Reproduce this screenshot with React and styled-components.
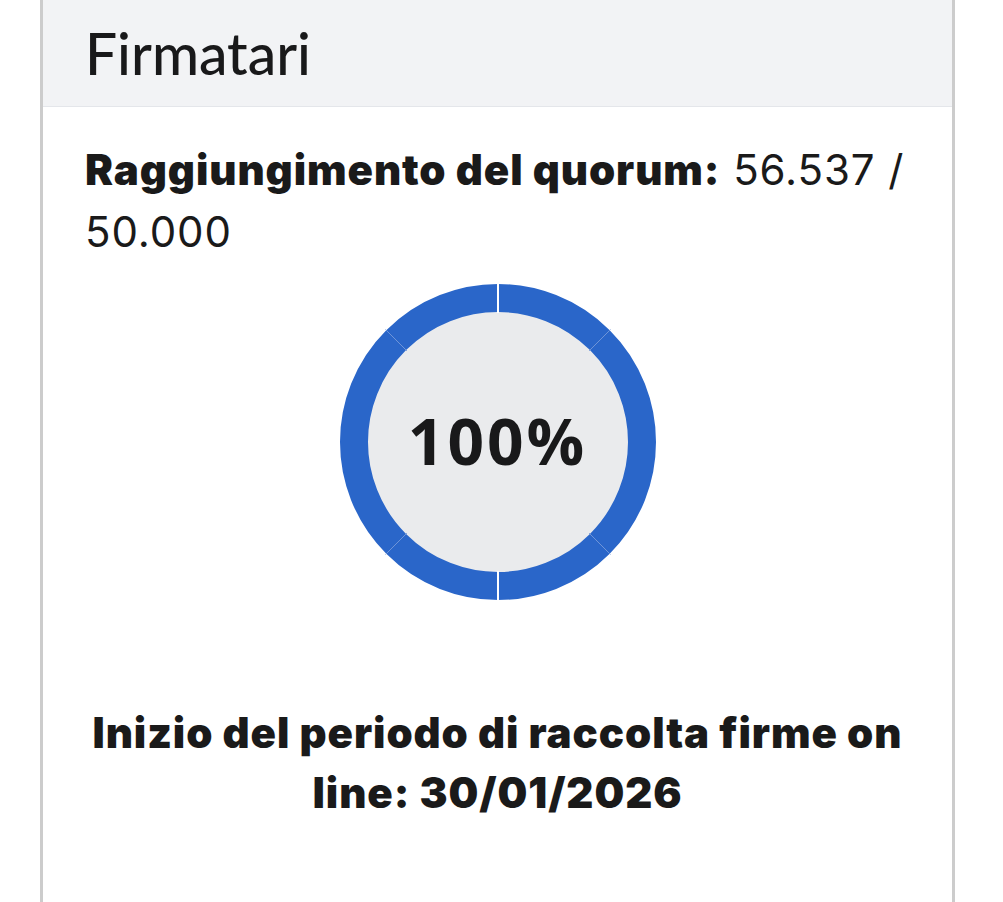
import React from 'react';
import styled, { createGlobalStyle } from 'styled-components';

const GlobalStyle = createGlobalStyle`
    body {
        margin: 0;
        background: #ffffff;
        font-family: Inter, "Liberation Sans", sans-serif;
        color: #1a1a1a;
    }
`;

const Card = styled.div`
    margin-left: 40px;
    width: 909px;
    height: 902px;
    border-left: 3px solid #cccccc;
    border-right: 3px solid #cccccc;
    display: flex;
    flex-direction: column;
`;

const Header = styled.div`
    height: 107px;
    background: #f2f3f5;
    border-bottom: 1px solid #e4e6ea;
    display: flex;
    align-items: center;
    padding-left: 42px;
    box-sizing: border-box;
`;

const Title = styled.h2`
    margin: 0;
    font-family: Lato, "Noto Sans", sans-serif;
    font-weight: 500;
    font-size: 57px;
    color: #19191a;
`;

const Body = styled.div`
    padding: 32px 42px 0;
    display: flex;
    flex-direction: column;
`;

const Quorum = styled.p`
    margin: 0;
    font-size: 42px;
    line-height: 62px;
    letter-spacing: 0.9px;
`;

const Label = styled.strong`
    font-weight: 900;
`;

const Chart = styled.div`
    align-self: center;
    position: relative;
    width: 316px;
    height: 316px;
    margin-top: 21px;
`;

const Percent = styled.span`
    position: absolute;
    inset: 0;
    display: flex;
    align-items: center;
    justify-content: center;
    padding-bottom: 4px;
    font-family: "Open Sans", sans-serif;
    font-weight: 700;
    font-size: 64px;
    letter-spacing: 3px;
    color: #19191a;
`;

const Start = styled.p`
    margin: 103px 0 0;
    text-align: center;
    font-weight: 900;
    font-size: 42px;
    line-height: 60px;
    letter-spacing: 0.9px;
`;

const Donut = () => {
    const c = 158;
    const angles = [0, 45, 135, 180, 225, 315];
    return (
        <svg width="316" height="316" viewBox="0 0 316 316">
            <circle cx={c} cy={c} r={144} fill="#eaebed" stroke="#2a66c9" strokeWidth="28" />
            {angles.map(a => {
                const rad = (a * Math.PI) / 180;
                const major = a % 180 === 0;
                return (
                    <line
                        key={a}
                        x1={c + Math.sin(rad) * 129}
                        y1={c - Math.cos(rad) * 129}
                        x2={c + Math.sin(rad) * 159}
                        y2={c - Math.cos(rad) * 159}
                        stroke={major ? '#ffffff' : '#6f95d8'}
                        strokeWidth={major ? 2 : 1}
                    />
                );
            })}
        </svg>
    );
};

const App = () => (
    <>
        <GlobalStyle />
        <Card>
            <Header>
                <Title>Firmatari</Title>
            </Header>
            <Body>
                <Quorum>
                    <Label>Raggiungimento del quorum:</Label> 56.537 / 50.000
                </Quorum>
                <Chart>
                    <Donut />
                    <Percent>100%</Percent>
                </Chart>
                <Start>Inizio del periodo di raccolta firme on line: 30/01/2026</Start>
            </Body>
        </Card>
    </>
);

export default App;
